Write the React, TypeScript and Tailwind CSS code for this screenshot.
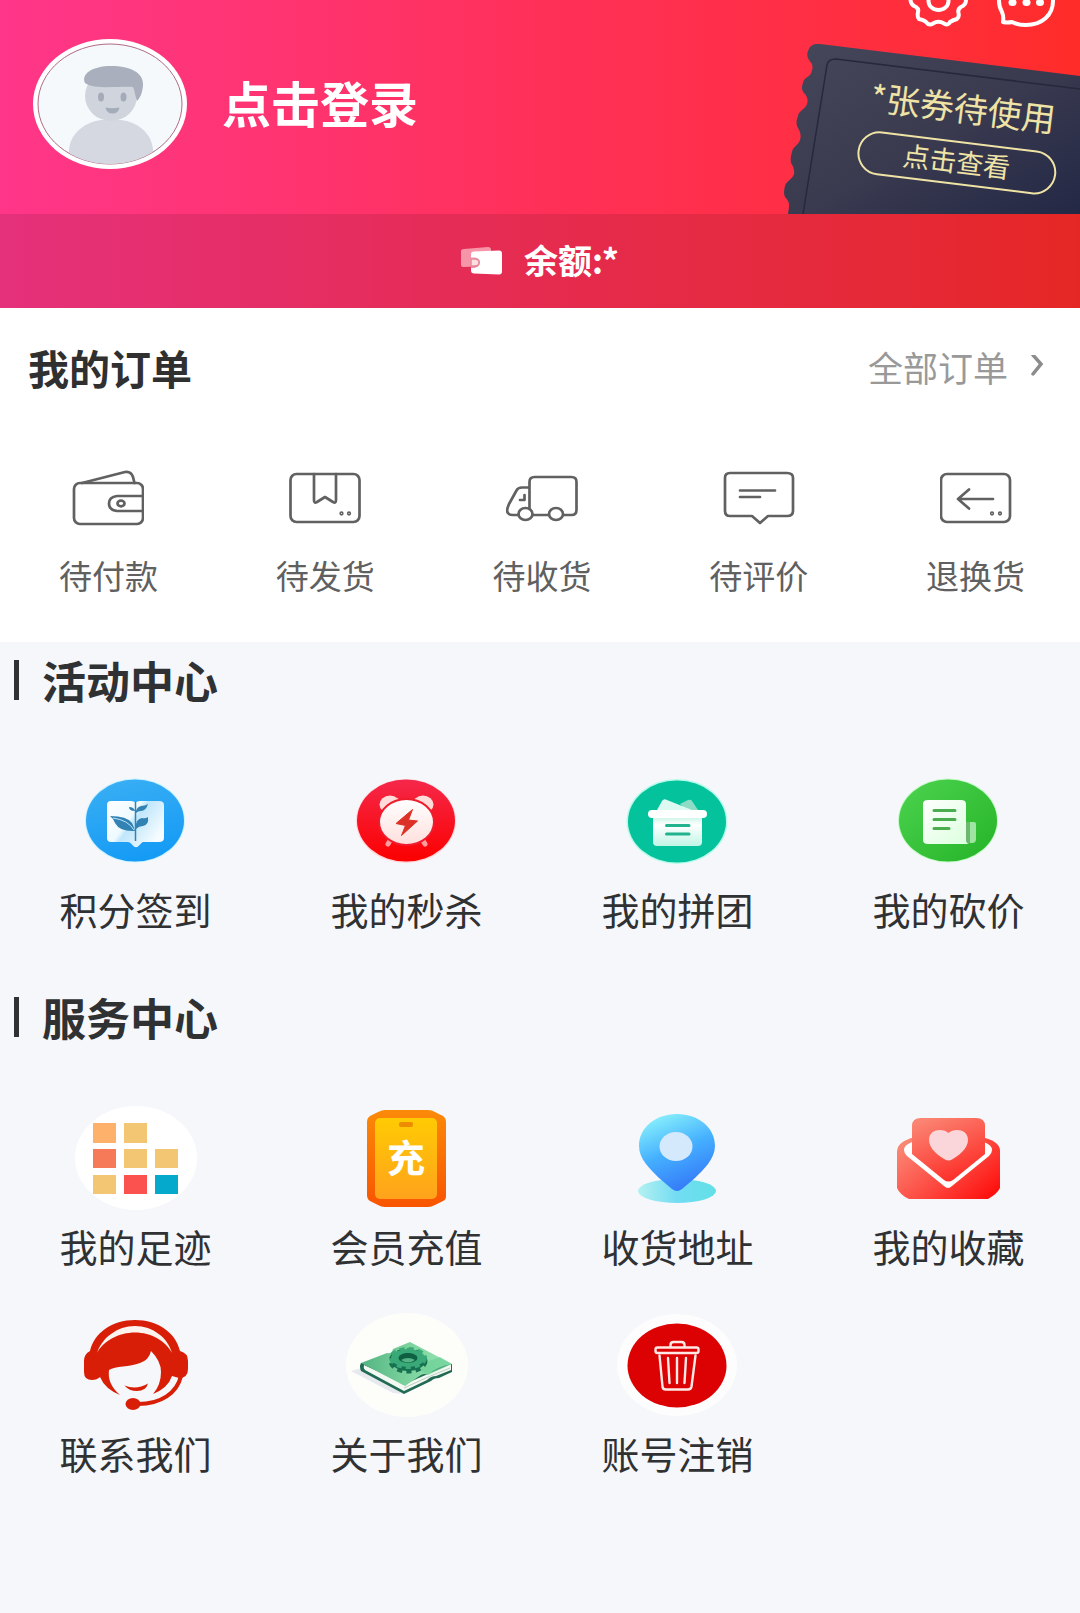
import type { ReactNode } from 'react';

type Item = { label: string; icon: ReactNode };

function Avatar() {
  return (
    <svg width="154" height="130" viewBox="0 0 154 130" aria-hidden="true">
      <defs>
        <clipPath id="avatarClip">
          <ellipse cx="77" cy="65" rx="71" ry="60" />
        </clipPath>
      </defs>
      <ellipse cx="77" cy="65" rx="77" ry="65" fill="#fff" />
      <ellipse cx="77" cy="65" rx="72" ry="60" fill="#f5f9fc" stroke="#b06a86" strokeWidth="1" />
      <g clipPath="url(#avatarClip)">
        <path d="M36 130v-20c2-17 17-27 32-29h20c16 2 30 12 32 29v20z" fill="#d5d8e0" />
        <ellipse cx="78" cy="57" rx="26" ry="25" fill="#d0d5dd" />
        <path d="M52 44c-4-9 7-17 26-17 20 0 32 7 32 18 0 8-3 14-6 17-2-5-2-10-4-14-14-1-38 3-48-4z" fill="#a9afbd" />
        <ellipse cx="68" cy="58" rx="3" ry="4.500" fill="#a4abb9" />
        <ellipse cx="90.500" cy="58" rx="3" ry="4.500" fill="#a4abb9" />
        <path d="M72.500 68.500q7 1.500 14 0-1 6-7 6t-7-6z" fill="#a4abb9" />
      </g>
    </svg>
  );
}

function GearIcon() {
  return (
    <svg width="60" height="56" viewBox="0 0 60 56" fill="none" stroke="#fff" strokeWidth="4" strokeLinejoin="round" aria-hidden="true">
      <path d="M2.500 27Q3 32 8 34q3 2 2 5-1 5 1 7 5 1 7 3 3 4 7 1.500 5.500-3.500 11 0 4 2.500 6-1.500 3-2 7-3 2.500-2 1.500-6t2.500-6q5-2 5-7t-5-7q-3.500-2-2.500-6T49 8q-4-1-7-3-2-4-6-1.500-5.500 3.500-11 0Q21 1 18 5q-2 2-7 3-2 2-1 7 1 3-2 5-5 2-5.500 7z" />
      <ellipse cx="30.500" cy="28" rx="10" ry="9" />
    </svg>
  );
}

function ChatIcon() {
  return (
    <svg width="60" height="56" viewBox="0 0 60 56" fill="none" stroke="#fff" strokeWidth="4" strokeLinejoin="round" aria-hidden="true">
      <path d="M30 4c16 0 27 10 27 24S46 52 30 52q-8 0-14-3-5 1-9 0 1-5-1-10-3-5-3-11C3 14 14 4 30 4z" />
      <g fill="#fff" stroke="none">
        <ellipse cx="16.500" cy="29.500" rx="4" ry="3.500" />
        <ellipse cx="30.500" cy="29.500" rx="4" ry="3.500" />
        <ellipse cx="44" cy="29.500" rx="4" ry="3.500" />
      </g>
    </svg>
  );
}

function Ticket() {
  return (
    <a href="#coupons" className="relative mt-[15px] block h-[170px] pl-[55px] pt-[45px] text-[#efe3a6]">
      <svg className="absolute left-0 top-0" width="296" height="170" viewBox="0 0 296 170" aria-hidden="true">
        <defs>
          <linearGradient id="ticketFill" x1="0" y1="0" x2="1" y2="1">
            <stop offset="0" stopColor="#45475a" />
            <stop offset="0.5" stopColor="#3b3b50" />
            <stop offset="1" stopColor="#232845" />
          </linearGradient>
        </defs>
        <path
          d="M296 32 36 0q-10-1-12 7-2 5 1 9 5 5 3 10c-1 8-8 6-9 13-2 5-1 7 1 10q5 5 3 11c-2 6-8 6-9 12-2 5-2 8 0 12q4 6 2 12c-2 6-7 6-8 12q-2 6-1 11 4 5 3 11c-2 6-7 6-9 12q-2 7 0 11 5 5 4 10l-1 7h292z"
          fill="url(#ticketFill)"
        />
        <path d="m19 170 24-149q1-6 9-6l244 30" fill="none" stroke="#26283b" strokeWidth="1.500" />
      </svg>
      <span className="relative flex rotate-[7deg] flex-col items-center gap-[16px] whitespace-nowrap">
        <span className="text-[34px] leading-[36px]">*张券待使用</span>
        <span className="flex h-[44px] w-[200px] items-center justify-center rounded-full border-2 border-[#efe3a6] pb-1 text-[27px] leading-[32px]">
          点击查看
        </span>
      </span>
    </a>
  );
}

function BalanceIcon() {
  return (
    <svg width="42" height="28" viewBox="0 0 42 28" aria-hidden="true">
      <path d="M3 2 27 0q3 0 3 3v16L2 20q-2 0-2-2V4q0-2 3-2z" fill="#f795a8" />
      <path d="M13 4.500 38 3.500q3 0 3 3v18q0 3-3 3l-25-1q-3 0-3-3v-3h4q5-1 5-5t-5-5h-4V7q0-2.500 3-2.500z" fill="#fff" />
      <path d="M10 12h4q4 0 4 3.500T14 19h-4z" fill="#fbdde2" stroke="#e58a9c" strokeWidth="1.500" />
    </svg>
  );
}

function LineIcon({ children }: { children: ReactNode }) {
  return (
    <svg
      width="72"
      height="56"
      viewBox="0 0 72 56"
      fill="none"
      stroke="#616161"
      strokeWidth="2.700"
      strokeLinecap="round"
      strokeLinejoin="round"
      aria-hidden="true"
    >
      {children}
    </svg>
  );
}

function BadgeIcon({ children }: { children: ReactNode }) {
  return (
    <svg width="122" height="104" viewBox="1 0 122 104" className="overflow-visible" aria-hidden="true">
      {children}
    </svg>
  );
}

const orders: Item[] = [
  {
    label: '待付款',
    icon: (
      <LineIcon>
        <rect x="2" y="13" width="69" height="41" rx="6" />
        <path d="M10 13 53 2q6-1 8 5l1.500 6M70 26H45q-8 1-8 7.500T45 41h25" />
        <ellipse cx="49" cy="33.500" rx="3.500" ry="2.800" />
      </LineIcon>
    ),
  },
  {
    label: '待发货',
    icon: (
      <LineIcon>
        <rect x="1.500" y="4" width="69" height="48" rx="6" />
        <path d="M25 4v26q0 4 3 2l8-5 8 5q3 2 3-2V4" />
        <circle cx="52.500" cy="43.500" r="0.800" />
        <circle cx="60" cy="43.500" r="0.800" />
      </LineIcon>
    ),
  },
  {
    label: '待收货',
    icon: (
      <LineIcon>
        <path d="M23.500 38V12q0-5 5-5h37q5 0 5 5v28q0 5-5 5h-8M43 45H27M23.500 17.500H16q-4 0-5.500 3L3 34q-3 7-1 9 1 2 5 2h5.500M18.500 25v5H14" />
        <ellipse cx="19.500" cy="44" rx="7" ry="6" />
        <ellipse cx="50" cy="44" rx="7" ry="6" />
      </LineIcon>
    ),
  },
  {
    label: '待评价',
    icon: (
      <LineIcon>
        <path d="M7 3h57q6 0 6 5v33q0 5-6 5H45l-8 7-8-7H7q-5 0-5-5V8q0-5 5-5zM17 20.500h35M17 27h20" />
      </LineIcon>
    ),
  },
  {
    label: '退换货',
    icon: (
      <LineIcon>
        <rect x="1" y="4" width="69" height="48" rx="6" />
        <path d="M29 19.500 18 29l11 9.500M18 29h35" />
        <circle cx="52" cy="43.500" r="0.800" />
        <circle cx="60" cy="43.500" r="0.800" />
      </LineIcon>
    ),
  },
];

const activities: Item[] = [
  {
    label: '积分签到',
    icon: (
      <BadgeIcon>
        <defs>
          <linearGradient id="checkinFill" x1="0.3" y1="0" x2="0.6" y2="1">
            <stop offset="0" stopColor="#38aef4" />
            <stop offset="1" stopColor="#149af5" />
          </linearGradient>
          <linearGradient id="checkinBook" x1="0" y1="0" x2="1" y2="0.6">
            <stop offset="0" stopColor="#fff" />
            <stop offset="0.46" stopColor="#eefaff" />
            <stop offset="0.54" stopColor="#bfe6fb" />
            <stop offset="1" stopColor="#f6fcff" />
          </linearGradient>
        </defs>
        <ellipse cx="61" cy="52.500" rx="50" ry="42" fill="#c8f1ff" />
        <ellipse cx="61" cy="52.500" rx="49" ry="41" fill="url(#checkinFill)" />
        <path d="M37 33h20q3 0 4.500 1.500Q63 33 66 33h19q5 0 5 4v33q0 4-5 4H69q-1 0-2 1.500l-3 3q-2 1.500-4 0l-3-3Q56 74 54 74H37q-4 0-4-4V37q0-4 4-4z" fill="url(#checkinBook)" />
        <path d="M61.500 34v39" stroke="#3283b4" strokeWidth="1.500" />
        <path d="M36 48q17 0 22 7 2 4 3 8-15 1-20-8-2-5-5-7zM62 56q1-5 6-6 3 1 6-1 1 8-5 9-4 0-7 3zM62 43q1-4 5-5 4 0 7-2-2 7-7 7-3 0-5 2zM61 43q-6 0-6-4 5 0 6 4z" fill="#3283b4" />
        <path d="M39 50q15 2 21 12" stroke="#bfe5f8" fill="none" />
      </BadgeIcon>
    ),
  },
  {
    label: '我的秒杀',
    icon: (
      <BadgeIcon>
        <defs>
          <linearGradient id="alarmFill" x1="0" y1="0" x2="0" y2="1">
            <stop offset="0" stopColor="#f5284a" />
            <stop offset="0.5" stopColor="#f81424" />
            <stop offset="1" stopColor="#fb0000" />
          </linearGradient>
          <linearGradient id="alarmFace" x1="0" y1="0" x2="0" y2="1">
            <stop offset="0" stopColor="#fff" />
            <stop offset="1" stopColor="#ffe0dd" />
          </linearGradient>
        </defs>
        <ellipse cx="61" cy="53" rx="50" ry="42" fill="#ffd5d8" />
        <ellipse cx="61" cy="52.500" rx="49" ry="41" fill="url(#alarmFill)" />
        <ellipse cx="45" cy="36.500" rx="10.500" ry="9" fill="#ffdcd9" />
        <ellipse cx="78" cy="36.500" rx="10.500" ry="9" fill="#ffdcd9" />
        <path d="m46 71-3 5M77 71l3 5" stroke="#ff9d9d" strokeWidth="5" strokeLinecap="round" />
        <ellipse cx="61.500" cy="54" rx="28.500" ry="24" fill="#ee1c2c" />
        <ellipse cx="61.500" cy="54" rx="26.500" ry="22" fill="url(#alarmFace)" />
        <path d="M67.500 41.500 51 55.500l9.500 2-4 10 16-14.500-9-1z" fill="#dc3127" stroke="#dc3127" strokeLinejoin="round" />
      </BadgeIcon>
    ),
  },
  {
    label: '我的拼团',
    icon: (
      <BadgeIcon>
        <defs>
          <linearGradient id="groupBox" x1="0" y1="0" x2="0" y2="1">
            <stop offset="0" stopColor="#c4f3e4" />
            <stop offset="0.3" stopColor="#fff" />
            <stop offset="1" stopColor="#c0f5e5" />
          </linearGradient>
        </defs>
        <ellipse cx="61" cy="53.500" rx="50.500" ry="42.500" fill="#b6fbea" />
        <ellipse cx="61" cy="53.500" rx="49" ry="41" fill="#04c29c" />
        <path d="m64 36 8-4q3-1 4 1l6 9H70z" fill="#8fdcc6" />
        <path d="m41 42 5-9q2-3 5-1l25 10z" fill="#dcfaf1" />
        <path d="M37 48h49v26q0 4-4 4H41q-4 0-4-4z" fill="url(#groupBox)" />
        <rect x="32" y="42" width="59" height="8" rx="4" fill="#fff" />
        <path d="M50.500 57.500H73M50.500 66H73" stroke="#22b28d" strokeWidth="3" strokeLinecap="round" />
      </BadgeIcon>
    ),
  },
  {
    label: '我的砍价',
    icon: (
      <BadgeIcon>
        <defs>
          <linearGradient id="bargainFill" x1="0" y1="0" x2="1" y2="1">
            <stop offset="0" stopColor="#4dd350" />
            <stop offset="1" stopColor="#24b327" />
          </linearGradient>
          <linearGradient id="bargainPaper" x1="0" y1="0" x2="1" y2="1">
            <stop offset="0" stopColor="#fff" />
            <stop offset="1" stopColor="#dbffdd" />
          </linearGradient>
        </defs>
        <ellipse cx="61" cy="52.500" rx="50" ry="42" fill="#c5fac8" />
        <ellipse cx="61" cy="52.500" rx="49" ry="41" fill="url(#bargainFill)" />
        <path d="M78 54h9q2 0 2 2v15q0 4-4 4h-5z" fill="#9fe5a2" />
        <path d="M79 54h4v21h-4z" fill="#6cb870" />
        <path d="M41 32h33q5 0 5 4v36q0 3 3 4H41q-5 0-5-4V36q0-4 5-4z" fill="url(#bargainPaper)" />
        <path d="M47 42.500h21M47 51.500h21M47 60.500h15" stroke="#4cac50" strokeWidth="3" strokeLinecap="round" />
      </BadgeIcon>
    ),
  },
];

const services: Item[] = [
  {
    label: '我的足迹',
    icon: (
      <BadgeIcon>
        <ellipse cx="62" cy="53" rx="61" ry="52" fill="#fff" />
        <path d="M19 18h23v20H19z" fill="#fdb16b" />
        <path d="M50 18h23v20H50zM50 44h23v19H50zM81 44h23v19H81zM19 70h23v19H19z" fill="#f3c673" />
        <path d="M19 44h23v19H19z" fill="#f67a57" />
        <path d="M50 70h23v19H50z" fill="#fb5250" />
        <path d="M81 70h23v19H81z" fill="#04a9cc" />
      </BadgeIcon>
    ),
  },
  {
    label: '会员充值',
    icon: (
      <BadgeIcon>
        <defs>
          <linearGradient id="topupEdge" x1="0" y1="0" x2="0" y2="1">
            <stop offset="0" stopColor="#fb8a08" />
            <stop offset="1" stopColor="#f95400" />
          </linearGradient>
          <linearGradient id="topupFace" x1="0" y1="0" x2="0" y2="1">
            <stop offset="0" stopColor="#ffcb03" />
            <stop offset="1" stopColor="#ffa21c" />
          </linearGradient>
        </defs>
        <path d="M40 5h43q4 0 7 2l8 4q3 2 3 6v74q0 4-3 5l-8 4q-4 2-7 2H40q-4 0-7-2l-8-4q-3-2-3-6V17q0-4 3-6l8-4q4-2 7-2z" fill="url(#topupEdge)" />
        <rect x="30" y="13" width="62" height="81" rx="5" fill="url(#topupFace)" />
        <rect x="54" y="17" width="14" height="5" rx="2" fill="#ee8c00" />
        <text x="61" y="67" textAnchor="middle" fontSize="38" fontWeight="700" fill="#fff">
          充
        </text>
      </BadgeIcon>
    ),
  },
  {
    label: '收货地址',
    icon: (
      <BadgeIcon>
        <defs>
          <linearGradient id="pinFill" x1="0.2" y1="0" x2="0.6" y2="1">
            <stop offset="0" stopColor="#8cf4fb" />
            <stop offset="0.5" stopColor="#45b0ff" />
            <stop offset="1" stopColor="#3478f8" />
          </linearGradient>
          <linearGradient id="pinBase" x1="0" y1="0" x2="1" y2="0">
            <stop offset="0" stopColor="#b4f1f1" />
            <stop offset="0.5" stopColor="#72dcf3" />
            <stop offset="1" stopColor="#62e0e6" />
          </linearGradient>
        </defs>
        <ellipse cx="61" cy="86" rx="39" ry="12" fill="url(#pinBase)" />
        <path d="M61 9c22 0 38 14 38 32 0 13-12 24-20 32L66 84q-5 4-10 0L43 73C34 64 23 54 23 41 23 23 39 9 61 9z" fill="url(#pinFill)" />
        <ellipse cx="60" cy="41.500" rx="16.500" ry="14.500" fill="#d5e9fd" />
      </BadgeIcon>
    ),
  },
  {
    label: '我的收藏',
    icon: (
      <BadgeIcon>
        <defs>
          <linearGradient id="favFill" x1="0" y1="0.2" x2="1" y2="0.9">
            <stop offset="0" stopColor="#fb8573" />
            <stop offset="0.5" stopColor="#fd4b42" />
            <stop offset="1" stopColor="#fe0c0a" />
          </linearGradient>
          <linearGradient id="favCard" x1="0.2" y1="0" x2="0.7" y2="1">
            <stop offset="0" stopColor="#fb8573" />
            <stop offset="1" stopColor="#fd2924" />
          </linearGradient>
        </defs>
        <path d="M24 33h74q15 4 15 13v37q-3 6-12 11H22Q13 90 10 83V46q0-8 14-13z" fill="url(#favFill)" />
        <path d="M25 37q-8 3-8 8 0 3 3 6l37 30q4 4 8 0l37-30q3-3 3-6 0-5-8-8z" fill="#fff" />
        <path d="M34 13h55q9 0 9 8v28L66 75q-5 3-9 0L25 49V21q0-8 9-8z" fill="url(#favCard)" />
        <path d="M61.500 28C67 23 81 24 81 35c0 9-10 16-16 19.500q-3.500 2-7 0C52 51 42 44 42 35c0-11 14-12 19.500-7z" fill="#fad5da" />
      </BadgeIcon>
    ),
  },
  {
    label: '联系我们',
    icon: (
      <BadgeIcon>
        <path d="M16 39C20 21 38 8 61 8s41 13 45 31q8 2 8 10v8q0 9-9 9l-7-2q-4 12-19 18 8-9 8-22 0-11-10-21-2 9-11 12c-10 4-25 3-31 7q-2 14 11 25-15-6-20-18-3 3-8 3-8 0-8-8V49q0-7 6-10z" fill="#d81e06" />
        <path d="M23 41c5-15 20-27 38-27s33 12 37 27C92 29 77 20.500 61 20.500S29 29 23 41z" fill="#fdf3ee" />
        <path d="M50.500 73.500q12 5 23.500-2-2 7.500-11 7.500-8 0-12.500-5.500z" fill="#d81e06" />
        <ellipse cx="59" cy="92" rx="7.500" ry="6" fill="#d81e06" />
        <path d="M64 92c23 0 39-11 43-28" fill="none" stroke="#d81e06" strokeWidth="4" />
      </BadgeIcon>
    ),
  },
  {
    label: '关于我们',
    icon: (
      <BadgeIcon>
        <defs>
          <linearGradient id="aboutCover" x1="0" y1="0" x2="1" y2="0">
            <stop offset="0" stopColor="#52b583" />
            <stop offset="0.5" stopColor="#7bd19c" />
            <stop offset="1" stopColor="#94e6b4" />
          </linearGradient>
        </defs>
        <ellipse cx="62" cy="53" rx="61" ry="52" fill="#fdfefa" />
        <path d="M6 59 17 56l41 26-10-1z" fill="#e6e9ee" />
        <path d="M16 51q-2 3 0 8l43 23 27-13q3-3 8-3l13-6v-8z" fill="#216b55" />
        <path d="M19 53q-1 3 1 5l39 21 23-11q4-4 9-4l15-6v-6L60 72z" fill="#f4f8f2" />
        <path d="m59 76 24-11 22-9" fill="none" stroke="#b9cfc1" />
        <path d="m16 51 26-10q5 1 6-4l17-7 42 22q-17 3-24 11-3-2-7 0L60 74z" fill="url(#aboutCover)" />
        <path d="m70 54 13 9 24-11-12-7z" fill="#68cf93" opacity="0.6" />
        <ellipse cx="63" cy="49" rx="17" ry="10" fill="#17704f" stroke="#17704f" strokeWidth="5" strokeDasharray="5 4" />
        <ellipse cx="63" cy="46" rx="17" ry="9" fill="#3aa978" stroke="#3aa978" strokeWidth="4" strokeDasharray="5 4" />
        <ellipse cx="63" cy="46" rx="9.500" ry="5" fill="#0f6043" />
        <path d="M56 48q7-4 14 0-7 5-14 0z" fill="#54b384" />
      </BadgeIcon>
    ),
  },
  {
    label: '账号注销',
    icon: (
      <BadgeIcon>
        <ellipse cx="61" cy="53" rx="60" ry="51" fill="#fdfdfd" />
        <ellipse cx="61" cy="53.500" rx="49.500" ry="42" fill="#dc0203" />
        <g fill="none" stroke="#ffe9e7" strokeWidth="2.400" strokeLinecap="round" strokeLinejoin="round">
          <rect x="39.500" y="35.500" width="43" height="5.500" rx="2" />
          <path d="M54.500 35v-2q0-3 3-3h8q3 0 3 3v2M43.500 43.500l3 31q0 3 3.500 3h22q3 0 3.500-3l4-31M52 46l1.500 25M61 46v25M70 46l-1.500 25" />
        </g>
      </BadgeIcon>
    ),
  },
];

function Section({ title, items }: { title: string; items: Item[] }) {
  return (
    <section className="pb-[64px]">
      <h2 className="flex items-center gap-[23px] pl-[14px] text-[44px] font-bold leading-[40px] text-[#303133]">
        <span className="h-[40px] w-[5px] bg-[#303133]" />
        {title}
      </h2>
      <ul className="-mr-1 mt-[68px] grid grid-cols-4 gap-y-[42px]">
        {items.map((item) => (
          <li key={item.label}>
            <a href="#" className="flex flex-col items-center gap-[13px] text-[38px] leading-[48px] text-[#303133]">
              {item.icon}
              {item.label}
            </a>
          </li>
        ))}
      </ul>
    </section>
  );
}

export default function App() {
  return (
    <main className="min-h-screen overflow-hidden bg-[#f5f7fb] font-['Noto_Sans_CJK_SC',sans-serif]">
      <header className="bg-linear-to-r from-[#ff3689] via-[#ff3058] to-[#ff2c29] text-white">
        <div className="flex h-[214px] items-start justify-between overflow-hidden">
          <a href="#login" className="flex items-center gap-[35px] pl-[33px] pt-[39px] text-[49px] font-bold leading-[60px]">
            <Avatar />
            <span className="pb-1">点击登录</span>
          </a>
          <div className="w-[296px]">
            <div className="-mt-[27px] flex justify-end gap-[28px] pr-[24px]">
              <button type="button" aria-label="设置">
                <GearIcon />
              </button>
              <button type="button" aria-label="消息">
                <ChatIcon />
              </button>
            </div>
            <Ticket />
          </div>
        </div>
        <div className="flex h-[94px] items-center justify-center gap-[21px] bg-black/10 text-[34px] font-bold">
          <BalanceIcon />
          <span className="pb-1">余额:*</span>
        </div>
      </header>

      <section className="bg-white pb-[47px] pt-[35px]">
        <div className="flex items-center justify-between pl-[28px] pr-[36px] leading-[48px]">
          <h2 className="text-[41px] font-bold text-[#303030]">我的订单</h2>
          <a href="#orders" className="flex items-center gap-[22px] text-[35px] text-[#999]">
            全部订单
            <svg width="14" height="24" viewBox="0 1 14 24" fill="none" stroke="#8c8c8c" strokeWidth="3.500" strokeLinecap="round" aria-hidden="true">
              <path d="m3 1 8 9-8 10" />
            </svg>
          </a>
        </div>
        <ul className="-mr-1 mt-[79px] grid grid-cols-5">
          {orders.map((item) => (
            <li key={item.label}>
              <a href="#orders" className="flex flex-col items-center gap-[29px] text-[33px] leading-[40px] text-[#606060]">
                {item.icon}
                {item.label}
              </a>
            </li>
          ))}
        </ul>
      </section>

      <div className="pt-[18px]">
        <Section title="活动中心" items={activities} />
        <Section title="服务中心" items={services} />
      </div>
    </main>
  );
}
